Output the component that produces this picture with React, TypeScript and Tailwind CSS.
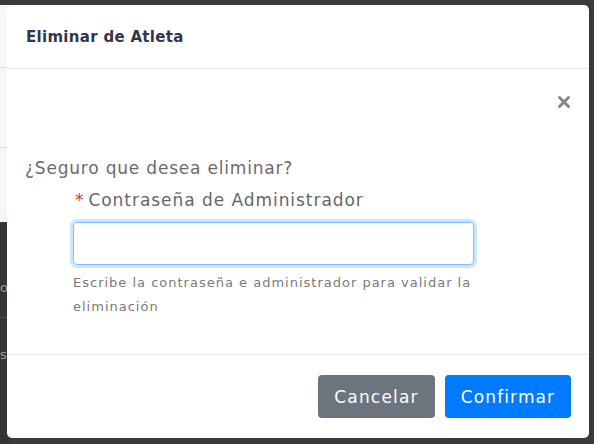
import React from "react";

export default function App() {
  const font = { fontFamily: '"DejaVu Sans", "Noto Sans", sans-serif' };
  return (
    <div className="relative w-[594px] h-[444px] overflow-hidden bg-[#3a3a3a]" style={font}>
      {/* page underneath */}
      <div className="absolute left-0 top-[5px] w-[10px] h-[217px] bg-[#f7f7f7] flex flex-col">
        <div className="h-[63px] border-b border-[#e2e2e2]" />
        <div className="h-[80px] border-b border-[#e2e2e2]" />
      </div>
      <div className="absolute left-0 top-[222px] w-[10px] h-[222px] bg-[#343434] border-t border-[#2f4a2f] flex flex-col">
        <div className="h-[95px] border-b border-[#4a4a4a] text-[#9a9a9a] text-[13px] pt-[58px] leading-none">o</div>
        <div className="text-[#9a9a9a] text-[13px] pt-[30px] leading-none">s</div>
      </div>

      {/* modal */}
      <div className="absolute left-[7px] top-[5px] w-[582px] h-[433px] bg-white rounded-[5px] flex flex-col">
        <div className="h-[64px] border-b border-[#e6e6ef] flex items-center pl-[19px] pt-[2px]">
          <span className="text-[15px] font-bold text-[#34344a] tracking-[0.3px]">Eliminar de Atleta</span>
        </div>
        <div className="h-[286px] px-[18px] pt-[26px] flex flex-col border-b border-[#e9ecef]">
          <div className="flex justify-end h-[14px]">
            <svg width="14" height="14" viewBox="0 0 14 14">
              <path d="M2.5 2.5 L11.5 11.5 M11.5 2.5 L2.5 11.5" stroke="#888" strokeWidth="3" strokeLinecap="round" />
            </svg>
          </div>
          <div className="mt-[47px] h-[24px] leading-[24px] text-[17px] text-[#6b6b6b] tracking-[0.8px]">
            ¿Seguro que desea eliminar?
          </div>
          <div className="ml-[48px] w-[401px] flex flex-col">
            <div className="mt-[8px] h-[24px] leading-[24px] text-[17px] text-[#666] tracking-[0.95px] whitespace-nowrap">
              <span className="text-[#e3342f] mr-[4px] ml-[2px]">*</span>Contraseña de Administrador
            </div>
            <input
              type="text"
              className="mt-[10px] h-[43px] w-[401px] rounded-[4px] border border-[#80bdff] outline-none shadow-[0_0_0_3px_rgba(0,123,255,0.2)]"
            />
            <div className="mt-[6px] text-[13px] leading-[24px] text-[#7a7a7a] tracking-[1px] whitespace-nowrap">
              Escribe la contraseña e administrador para validar la
              <br />
              eliminación
            </div>
          </div>
        </div>
        <div className="flex-1 flex items-center justify-end pr-[18px] gap-[10px] pb-[1px]">
          <button className="w-[117px] h-[43px] pt-[3px] rounded-[4px] bg-[#6c757d] text-white text-[17px] tracking-[1.2px]">
            Cancelar
          </button>
          <button className="w-[126px] h-[43px] pt-[3px] rounded-[4px] bg-[#007bff] text-white text-[17px] tracking-[1.1px]">
            Confirmar
          </button>
        </div>
      </div>
    </div>
  );
}
